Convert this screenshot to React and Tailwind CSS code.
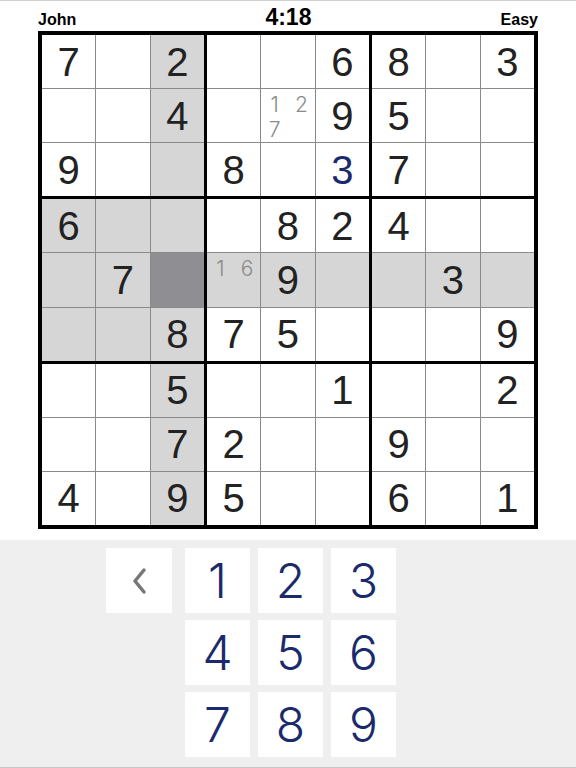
import React from "react";

const BOARD = [
  ["7", "", "2", "", "", "6", "8", "", "3"],
  ["", "", "4", "", ["1", "2", "7"], "9", "5", "", ""],
  ["9", "", "", "8", "", "3*", "7", "", ""],
  ["6", "", "", "", "8", "2", "4", "", ""],
  ["", "7", "", ["1", "6"], "9", "", "", "3", ""],
  ["", "", "8", "7", "5", "", "", "", "9"],
  ["", "", "5", "", "", "1", "", "", "2"],
  ["", "", "7", "2", "", "", "9", "", ""],
  ["4", "", "9", "5", "", "", "6", "", "1"],
];

const SEL = { r: 4, c: 2 };

function cellBg(r, c) {
  if (r === SEL.r && c === SEL.c) return "bg-[#8e8e93]";
  const sameBox = Math.floor(r / 3) === Math.floor(SEL.r / 3) && Math.floor(c / 3) === Math.floor(SEL.c / 3);
  if (r === SEL.r || c === SEL.c || sameBox) return "bg-[#d6d6d6]";
  return "bg-white";
}

function Cell({ r, c }) {
  const v = BOARD[r][c];
  const bg = cellBg(r, c);
  if (Array.isArray(v)) {
    return (
      <div className={`${bg} min-w-0 min-h-0`}>
        <div className="grid grid-cols-2 pt-[3px] text-center text-[21px] leading-[25px] font-light text-[#8a8a8a] font-['Inter',sans-serif]">
          {v.map((m) => (
            <span key={m}>{m}</span>
          ))}
        </div>
      </div>
    );
  }
  const blue = v.endsWith("*");
  return (
    <div
      className={`${bg} min-w-0 min-h-0 flex items-center justify-center text-[40px] leading-none font-['Liberation_Sans',Arial,sans-serif] ${
        blue ? "text-[#1a2a6c]" : "text-[#222]"
      }`}
    >
      {v.replace("*", "")}
    </div>
  );
}

function Box({ br, bc }) {
  const cells = [];
  for (let i = 0; i < 3; i++)
    for (let j = 0; j < 3; j++) cells.push(<Cell key={`${i}${j}`} r={br * 3 + i} c={bc * 3 + j} />);
  return <div className="grid grid-cols-3 grid-rows-3 gap-px bg-[#8a8a8a] min-h-0">{cells}</div>;
}

function Key({ children }) {
  return (
    <button className="w-[65px] h-[65px] bg-white flex items-center justify-center text-[48px] font-light text-[#1a2a6c] font-['Inter',sans-serif] leading-none">
      {children}
    </button>
  );
}

export default function App() {
  return (
    <div className="w-[576px] h-[768px] bg-white flex flex-col border-t border-[#cfcfcf] font-['Liberation_Sans',Arial,sans-serif]">
      {/* Header */}
      <div className="h-[30px] px-[38px] flex items-baseline justify-between pt-[6px] text-black">
        <span className="text-[16px] font-semibold leading-[20px]">John</span>
        <span className="text-[23px] font-semibold leading-[20px]">4:18</span>
        <span className="text-[16px] font-semibold leading-[20px]">Easy</span>
      </div>

      {/* Board */}
      <div className="ml-[38px] w-[500px] h-[498px] border-4 border-black">
        <div className="grid grid-cols-3 grid-rows-3 gap-[3px] bg-black w-full h-full">
          {[0, 1, 2].map((br) => [0, 1, 2].map((bc) => <Box key={`${br}${bc}`} br={br} bc={bc} />))}
        </div>
      </div>

      {/* Keypad */}
      <div className="mt-[11px] flex-1 bg-[#efefef] border-b border-[#c8c8c8] pt-[8px] pl-[106px] flex gap-[13px]">
        <button className="w-[66px] h-[65px] bg-white flex items-center justify-center">
          <svg width="18" height="28" viewBox="0 0 18 28" fill="none">
            <path d="M14 3 L5 14 L14 25" stroke="#777" strokeWidth="3.5" strokeLinecap="round" strokeLinejoin="round" />
          </svg>
        </button>
        <div className="grid grid-cols-3 gap-x-[8px] gap-y-[7px] self-start">
          {["1", "2", "3", "4", "5", "6", "7", "8", "9"].map((n) => (
            <Key key={n}>{n}</Key>
          ))}
        </div>
      </div>
    </div>
  );
}
